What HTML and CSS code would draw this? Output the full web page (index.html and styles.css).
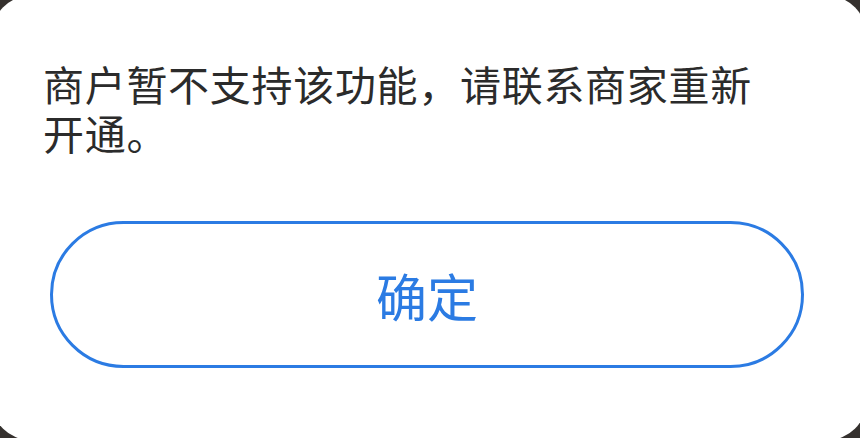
FILE: index.html
```html
<!DOCTYPE html>
<html lang="zh-CN">
<head>
  <meta charset="UTF-8">
  <meta name="viewport" content="width=device-width, initial-scale=1.0">
  <title>提示</title>
  <link rel="stylesheet" href="styles.css">
</head>
<body>
  <div class="dialog">
    <p class="message">商户暂不支持该功能，请联系商家重新开通。</p>
    <div class="actions">
      <button class="confirm">确定</button>
    </div>
  </div>
</body>
</html>
```

FILE: styles.css
```css
* {
  margin: 0;
  padding: 0;
  box-sizing: border-box;
}

html, body {
  height: 100%;
}

body {
  background-color: #35312e;
  font-family: "Noto Sans CJK SC", "Noto Sans", sans-serif;
  overflow: hidden;
}

.dialog {
  background: #fff;
  height: 444px;
  margin: -4px -6px 0 -8px;
  border-radius: 38px;
  padding: 63px 62px 0 51px;
}

.message {
  font-size: 41px;
  letter-spacing: 0.7px;
  line-height: 49px;
  color: #2b2b2b;
  max-width: 725px;
}

.actions {
  margin-top: 64px;
  padding-left: 7px;
}

.confirm {
  display: block;
  width: 100%;
  height: 147px;
  background: #fff;
  border: 3px solid #2b7be3;
  border-radius: 74px;
  color: #2b7be3;
  font-family: inherit;
  font-size: 51px;
  cursor: pointer;
}
```
